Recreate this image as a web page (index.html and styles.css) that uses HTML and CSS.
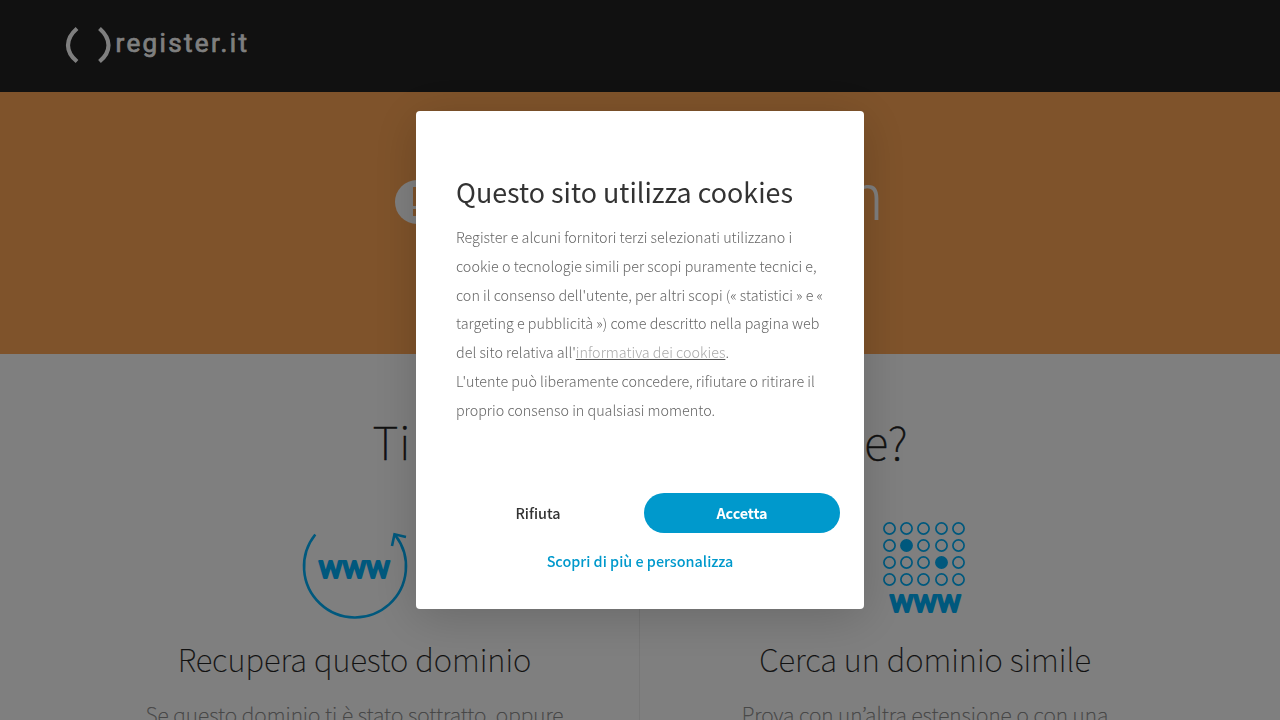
FILE: index.html
```html
<!DOCTYPE html>
<html lang="it">
<head>
<meta charset="utf-8">
<title>register.it</title>
<link rel="stylesheet" href="styles.css">
</head>
<body>
<header class="header">
  <svg class="logo" width="184" height="40" viewBox="64 24 184 40" role="img" aria-label="register.it">
    <g fill="none" stroke="#fff" stroke-width="4.2">
      <path d="M77 28.500C65 39 65 51.500 77 61.500"/>
      <path d="M99.500 28.500C111.500 39 111.500 51.500 99.500 61.500"/>
    </g>
    <text class="logo-text" x="115.500" y="52" textLength="131.500" lengthAdjust="spacing">register.it</text>
  </svg>
</header>
<section class="hero">
  <div class="hero-title">
    <svg width="44" height="44" viewBox="0 0 44 44"><circle cx="22" cy="22" r="22" fill="#fff"/><path d="M18 7h8v19h-8zM18 29h8v7h-8z" fill="#ffa756"/></svg>
    <span class="hero-text">n</span>
  </div>
</section>
<main class="main">
  <h1 class="question"><span class="question-start">Ti</span><span>e?</span></h1>
  <div class="options">
    <article class="option option-left">
      <svg class="icon" width="110" height="104" viewBox="300 518 110 104">
        <g fill="none" stroke="#00b1fa" stroke-width="2.600">
          <path d="M315.300 534.500A51 51 0 1 0 395.500 535.500"/>
          <path d="M392 546L394.500 534.300L406 537"/>
        </g>
        <text class="www" x="318.500" y="577.600" textLength="71.500" lengthAdjust="spacing">www</text>
      </svg>
      <h2 class="option-title">Recupera questo dominio</h2>
      <p class="option-text">Se questo dominio ti è stato sottratto, oppure</p>
    </article>
    <article class="option">
      <svg class="icon" width="90" height="104" viewBox="880 518 90 104">
        <g fill="none" stroke="#00b1fa" stroke-width="1.700">
          <circle cx="889.500" cy="528.500" r="5.600"/><circle cx="906.500" cy="528.500" r="5.600"/><circle cx="923.500" cy="528.500" r="5.600"/><circle cx="941.500" cy="528.500" r="5.600"/><circle cx="958.500" cy="528.500" r="5.600"/>
          <circle cx="889.500" cy="545.500" r="5.600"/><circle cx="906.500" cy="545.500" r="5.600" fill="#00b1fa"/><circle cx="923.500" cy="545.500" r="5.600"/><circle cx="941.500" cy="545.500" r="5.600"/><circle cx="958.500" cy="545.500" r="5.600"/>
          <circle cx="889.500" cy="562.500" r="5.600"/><circle cx="906.500" cy="562.500" r="5.600"/><circle cx="923.500" cy="562.500" r="5.600"/><circle cx="941.500" cy="562.500" r="5.600" fill="#00b1fa"/><circle cx="958.500" cy="562.500" r="5.600"/>
          <circle cx="889.500" cy="579.500" r="5.600"/><circle cx="906.500" cy="579.500" r="5.600"/><circle cx="923.500" cy="579.500" r="5.600"/><circle cx="941.500" cy="579.500" r="5.600"/><circle cx="958.500" cy="579.500" r="5.600"/>
        </g>
        <text class="www" x="889.500" y="611.600" textLength="71.500" lengthAdjust="spacing">www</text>
      </svg>
      <h2 class="option-title">Cerca un dominio simile</h2>
      <p class="option-text">Prova con un’altra estensione o con una</p>
    </article>
  </div>
</main>
<div class="overlay">
  <div class="dialog" role="dialog">
    <h2 class="dialog-title">Questo sito utilizza cookies</h2>
    <p class="dialog-text">Register e alcuni fornitori terzi selezionati utilizzano i<br>cookie o tecnologie simili per scopi puramente tecnici e,<br>con il consenso dell'utente, per altri scopi (« statistici » e «<br>targeting e pubblicità ») come descritto nella pagina web<br>del sito relativa all'<a class="policy">informativa dei cookies</a>.<br>L'utente può liberamente concedere, rifiutare o ritirare il<br>proprio consenso in qualsiasi momento.</p>
    <div class="actions">
      <button class="button">Rifiuta</button>
      <button class="button accept">Accetta</button>
    </div>
    <button class="customize">Scopri di più e personalizza</button>
  </div>
</div>
</body>
</html>
```
FILE: styles.css
```css
* { box-sizing: border-box; }
body {
  margin: 0;
  height: 720px;
  overflow: hidden;
  background: #fff;
  font-family: "Noto Sans CJK KR", "Open Sans", sans-serif;
}
h1, h2, p { margin: 0; font-weight: 300; white-space: nowrap; }
svg { display: block; flex: none; }
.header { height: 92px; padding: 24px 64px; background: #222; }
.logo-text { font: 400 26px Roboto, sans-serif; fill: #fff; stroke: #fff; stroke-width: .7px; stroke-linejoin: round; }
.hero { height: 262px; padding-top: 88px; background: #ffa756; }
.hero-title {
  display: flex;
  justify-content: space-between;
  width: 489px;
  margin-left: 395px;
  color: #fff;
  font-size: 63px;
  font-weight: 300;
}
.hero-text { line-height: 26px; }
.main { height: 366px; padding-top: 52px; overflow: hidden; }
.question {
  display: flex;
  justify-content: space-between;
  width: 535px;
  margin: 0 auto;
  color: #222;
  font-size: 45px;
  font-weight: 100;
  line-height: 70px;
  -webkit-text-stroke: .5px #222;
}
.question-start { letter-spacing: 1px; }
.options { display: grid; grid-template-columns: 640px 640px; margin-top: 42px; }
.option {
  display: flex;
  flex-direction: column;
  align-items: center;
  height: 220px;
  padding-right: 70px;
}
.option-left { padding: 0 0 0 70px; border-right: 1px solid #eee; }
.www {
  font: 400 32px Roboto, sans-serif;
  fill: #00b1fa;
  stroke: #00b1fa;
  stroke-width: 2.200px;
  stroke-linejoin: round;
}
.option-title { margin-top: 12px; color: #222; font-size: 31.2px; font-weight: 100; line-height: 50px; -webkit-text-stroke: .2px #222; }
.option-text { margin-top: 12px; color: #888; font-size: 21.1px; font-weight: 100; line-height: 36px; -webkit-text-stroke: .25px #888; }
.overlay {
  position: fixed;
  inset: 0;
  display: flex;
  align-items: center;
  justify-content: center;
  background: rgba(0, 0, 0, .5);
}
.dialog {
  width: 448px;
  height: 498px;
  padding: 60px 24px 0;
  border-radius: 4px;
  background: #fff;
  box-shadow: 0 8px 48px rgba(0, 0, 0, .18);
}
.dialog-title { padding-left: 16px; color: #333; font-size: 26.85px; font-weight: 400; line-height: 42px; }
.dialog-text { padding-left: 16px; margin-top: 10px; color: #666; font-size: 14.35px; font-weight: 300; line-height: 28.8px; }
.policy { color: #aaa; text-decoration: underline; text-decoration-color: #555; }
.actions { display: grid; grid-template-columns: 196px 196px; gap: 8px; margin-top: 68px; }
.button, .customize {
  height: 40px;
  padding: 0;
  border: 0;
  border-radius: 20px;
  background: none;
  color: #333;
  font: 500 14.4px/40px "Noto Sans CJK KR", "Open Sans", sans-serif;
}
.accept { background: #09c; color: #fff; font-weight: 700; letter-spacing: -.1px; }
.customize { width: 100%; margin-top: 8px; color: #09c; }
```
